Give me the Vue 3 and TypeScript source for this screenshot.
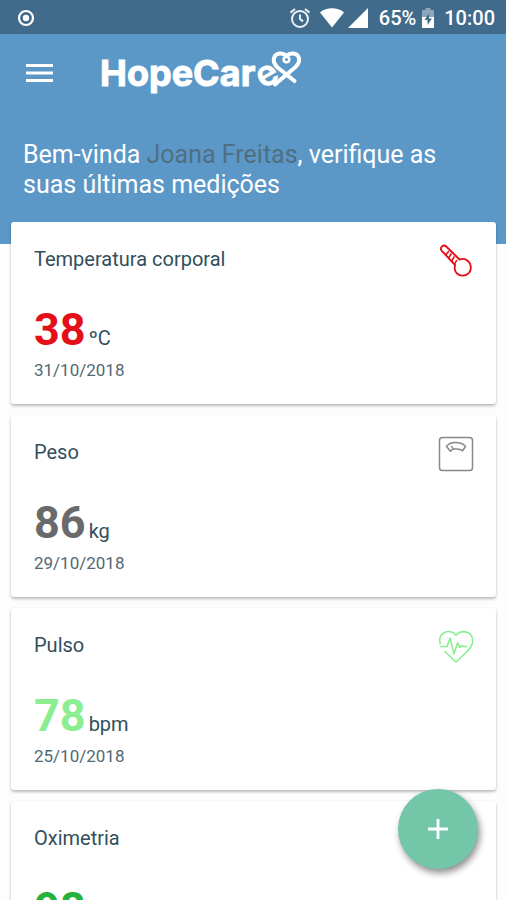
<script setup lang="ts">
type IconName = 'thermometer' | 'scale' | 'heart' | 'drop'

interface Measurement {
  title: string
  value: string
  unit: string
  date: string
  tone: string
  icon: IconName
}

const patient = 'Joana Freitas'

const measurements: Measurement[] = [
  { title: 'Temperatura corporal', value: '38', unit: 'ºC', date: '31/10/2018', tone: 'high', icon: 'thermometer' },
  { title: 'Peso', value: '86', unit: 'kg', date: '29/10/2018', tone: 'neutral', icon: 'scale' },
  { title: 'Pulso', value: '78', unit: 'bpm', date: '25/10/2018', tone: 'good', icon: 'heart' },
  { title: 'Oximetria', value: '98', unit: '%', date: '25/10/2018', tone: 'great', icon: 'drop' },
]
</script>

<template>
  <div class="screen">
    <div class="status">
      <svg class="record" viewBox="0 0 18 18" width="18" height="18" aria-hidden="true">
        <circle cx="9" cy="9" r="7" fill="none" stroke="#fff" stroke-width="2.2" />
        <circle cx="9" cy="9" r="3.2" fill="#fff" />
      </svg>
      <div class="status-right">
        <svg viewBox="0 0 22 22" width="22" height="22" aria-hidden="true" fill="none" stroke="#e9f1f6" stroke-width="2">
          <circle cx="11" cy="12" r="8" />
          <path d="M11 7.5V12l3 2.4M1.5 5.6 6 2M20.5 5.6 16 2" />
        </svg>
        <svg viewBox="0 0 26 20" width="26" height="20" aria-hidden="true">
          <path d="M1 4.4C8-1.2 18-1.2 25 4.4L13 19.5Z" fill="#fff" />
        </svg>
        <svg viewBox="0 0 20 20" width="20" height="20" aria-hidden="true">
          <path d="M20 0V20H0Z" fill="#fff" />
        </svg>
        <span class="percent">65%</span>
        <svg class="battery" viewBox="0 0 14 20" width="14" height="20" aria-hidden="true">
          <path d="M4.5 0h5v2H13v8H1V2h3.500z" fill="#8ba6b9" />
          <path d="M1 9h12v11H1z" fill="#fff" />
          <path d="M8 5.500 3.500 12H6.500v5L11 10.500H8z" fill="#416b8b" />
        </svg>
        <span class="clock">10:00</span>
      </div>
    </div>

    <main class="content">
      <header class="hero">
        <div class="bar">
          <button class="menu" type="button" aria-label="Menu">
            <svg viewBox="0 0 27 20" width="27" height="20" aria-hidden="true">
              <path d="M0 2.500h27M0 10h27M0 17.500h27" stroke="#fff" stroke-width="3" />
            </svg>
          </button>
          <div class="logo">
            <span class="wordmark">HopeCar<span class="tilted">e</span></span>
            <svg class="ribbon" viewBox="0 0 40 40" width="40" height="40" aria-hidden="true" fill="none" stroke="#fff" stroke-width="4" stroke-linecap="round" stroke-linejoin="round">
              <path d="M11 34.500 15 31L31.500 17C37.500 11 35.500 4.500 29.500 3.600C26 3.200 24 4.500 22.500 6C21 4.500 19 3.200 15.500 3.600C9.500 4.500 7.500 11 13 17L30.500 31" />
              <circle cx="22.500" cy="9.500" r="2.800" stroke-width="2.600" />
            </svg>
          </div>
        </div>
        <h1 class="welcome">Bem-vinda <span class="name">{{ patient }}</span>, verifique as suas últimas medições</h1>
      </header>

      <section class="cards">
        <article v-for="item in measurements" :key="item.title" class="card" :class="item.tone">
          <div class="card-head">
            <h2 class="title">{{ item.title }}</h2>
            <svg v-if="item.icon === 'thermometer'" class="icon" viewBox="0 0 36 36" width="36" height="36" aria-hidden="true" fill="none" stroke="currentColor" stroke-width="1.900" stroke-linecap="round" stroke-linejoin="round">
              <path d="M3.800 7.800C1.300 4.800 5 1 8 3.300L21.500 16.500C24 15.600 27.500 15.800 30 18C33.500 21 33.700 26.500 31 29.800C27.500 33.500 22 33.500 19 30.500C16.500 28 16.200 25 17.100 22Z" />
              <path d="M8 11.500 10.500 8.500M11 14.500 13 11M14 17.500 16 14M17 20.500 18.500 17.500" stroke-width="1.600" />
            </svg>
            <svg v-else-if="item.icon === 'scale'" class="icon" viewBox="0 0 36 36" width="36" height="36" aria-hidden="true" fill="none" stroke="currentColor" stroke-width="1.500" stroke-linejoin="round">
              <rect x="1.500" y="1.500" width="33" height="33" rx="3" />
              <path d="M8.500 10.500C12 5.300 23 5.300 27.500 10.500L24.500 14.800C23 13.500 21.500 13 19 13H16C14.500 13.200 13.500 14 12.500 15.200Z" />
              <path d="M15.500 13 13 10" stroke-width="1.200" />
            </svg>
            <svg v-else-if="item.icon === 'heart'" class="icon" viewBox="0 0 36 36" width="36" height="36" aria-hidden="true" fill="none" stroke="currentColor" stroke-width="1.600" stroke-linecap="round" stroke-linejoin="round">
              <path d="M2.200 14.500C-.5 3 11.500-.8 18 6.200C25-.8 36.500 3.500 34.300 14.500C33.600 18 31 20.500 28 23.500L18 33 7 22.500" />
              <path d="M2.500 17.500H9l3-8.500 4 16 3.500-11 2.500 4.500 1.500-2 1.500 1h3.500" />
            </svg>
            <svg v-else class="icon" viewBox="0 0 36 36" width="36" height="36" aria-hidden="true" fill="none" stroke="currentColor" stroke-width="1.500">
              <path d="M18 3C23 11 28 16 28 23a10 10 0 0 1-20 0C8 16 13 11 18 3Z" />
            </svg>
          </div>
          <p class="reading"><strong class="value">{{ item.value }}</strong><span class="unit">{{ item.unit }}</span></p>
          <time class="date">{{ item.date }}</time>
        </article>
      </section>
    </main>

    <button class="fab" type="button" aria-label="Adicionar medição">
      <svg viewBox="0 0 22 22" width="22" height="22" aria-hidden="true">
        <path d="M11 1v20M1 11h20" stroke="#fff" stroke-width="2.800" />
      </svg>
    </button>
  </div>
</template>

<style>
body {
  margin: 0;
}
</style>

<style scoped>
.screen {
  position: relative;
  display: flex;
  flex-direction: column;
  height: 100vh;
  overflow: hidden;
  background: #fdfdfd;
  color: #324f5c;
  font-family: Roboto, "Liberation Sans", sans-serif;
}

.status {
  display: flex;
  flex: none;
  align-items: center;
  justify-content: space-between;
  height: 34px;
  padding: 2px 11px 0 17px;
  box-sizing: border-box;
  background: #416b8b;
  color: #fff;
  font-size: 20px;
  font-weight: 500;
}

.status-right {
  display: flex;
  align-items: center;
}

.status-right svg + svg {
  margin-left: 8px;
}

.status-right svg + svg + svg {
  margin-left: 3px;
}

.status-right .percent {
  margin-left: 11px;
}

.battery {
  margin-left: 5px;
}

.clock {
  margin-left: 9px;
}

.content {
  flex: 1;
  min-height: 0;
  overflow-y: auto;
  scrollbar-width: none;
}

.hero {
  padding: 14px 24px 44px 23px;
  background: #5b98c8;
}

.bar {
  display: flex;
  align-items: center;
  height: 50px;
}

.menu {
  display: flex;
  padding: 0 3px;
  border: 0;
  background: none;
}

.logo {
  position: relative;
  margin-left: 44px;
  color: #fff;
}

.wordmark {
  font: 700 36px/50px Inter, Roboto, sans-serif;
  -webkit-text-stroke: 1px #fff;
}

.tilted {
  display: inline-block;
  transform: rotate(-30deg);
  -webkit-text-stroke: 0;
}

.ribbon {
  position: absolute;
  top: 2px;
  right: -27px;
}

.welcome {
  margin: 42px 0 0;
  color: #fff;
  font-size: 25px;
  font-weight: 400;
  line-height: 30px;
}

.name {
  color: #506f80;
}

.cards {
  display: grid;
  gap: 11px;
  margin-top: -22px;
  padding: 0 10px 24px 11px;
}

.card {
  padding: 20px 22px 20px 23px;
  border-radius: 3px;
  background: #fff;
  box-shadow: 0 2px 3px rgba(0, 0, 0, 0.25), 0 0 2px rgba(0, 0, 0, 0.06);
}

.card-head {
  display: flex;
  justify-content: space-between;
  height: 62px;
}

.icon {
  margin-top: 1px;
}

.title {
  margin: 0;
  padding-top: 5px;
  font-size: 20px;
  font-weight: 400;
  line-height: 24px;
}

.reading {
  display: flex;
  align-items: baseline;
  gap: 3px;
  margin: 0;
}

.value {
  font-size: 45px;
  font-weight: 700;
  line-height: 52px;
}

.unit {
  font-size: 20px;
  line-height: 24px;
}

.date {
  display: block;
  color: #526873;
  font-size: 17px;
  line-height: 28px;
}

.high .value,
.high .icon {
  color: #e50f19;
}

.neutral .value {
  color: #686a6b;
}

.neutral .icon {
  color: #858889;
}

.good .value,
.good .icon {
  color: #8bee91;
}

.great .value,
.great .icon {
  color: #27b13d;
}

.fab {
  position: absolute;
  right: 28px;
  bottom: 31px;
  display: grid;
  place-items: center;
  width: 80px;
  height: 80px;
  padding: 0;
  border: 0;
  border-radius: 50%;
  background: #74c6a9;
  box-shadow: 2px 4px 7px rgba(0, 0, 0, 0.45);
}
</style>
